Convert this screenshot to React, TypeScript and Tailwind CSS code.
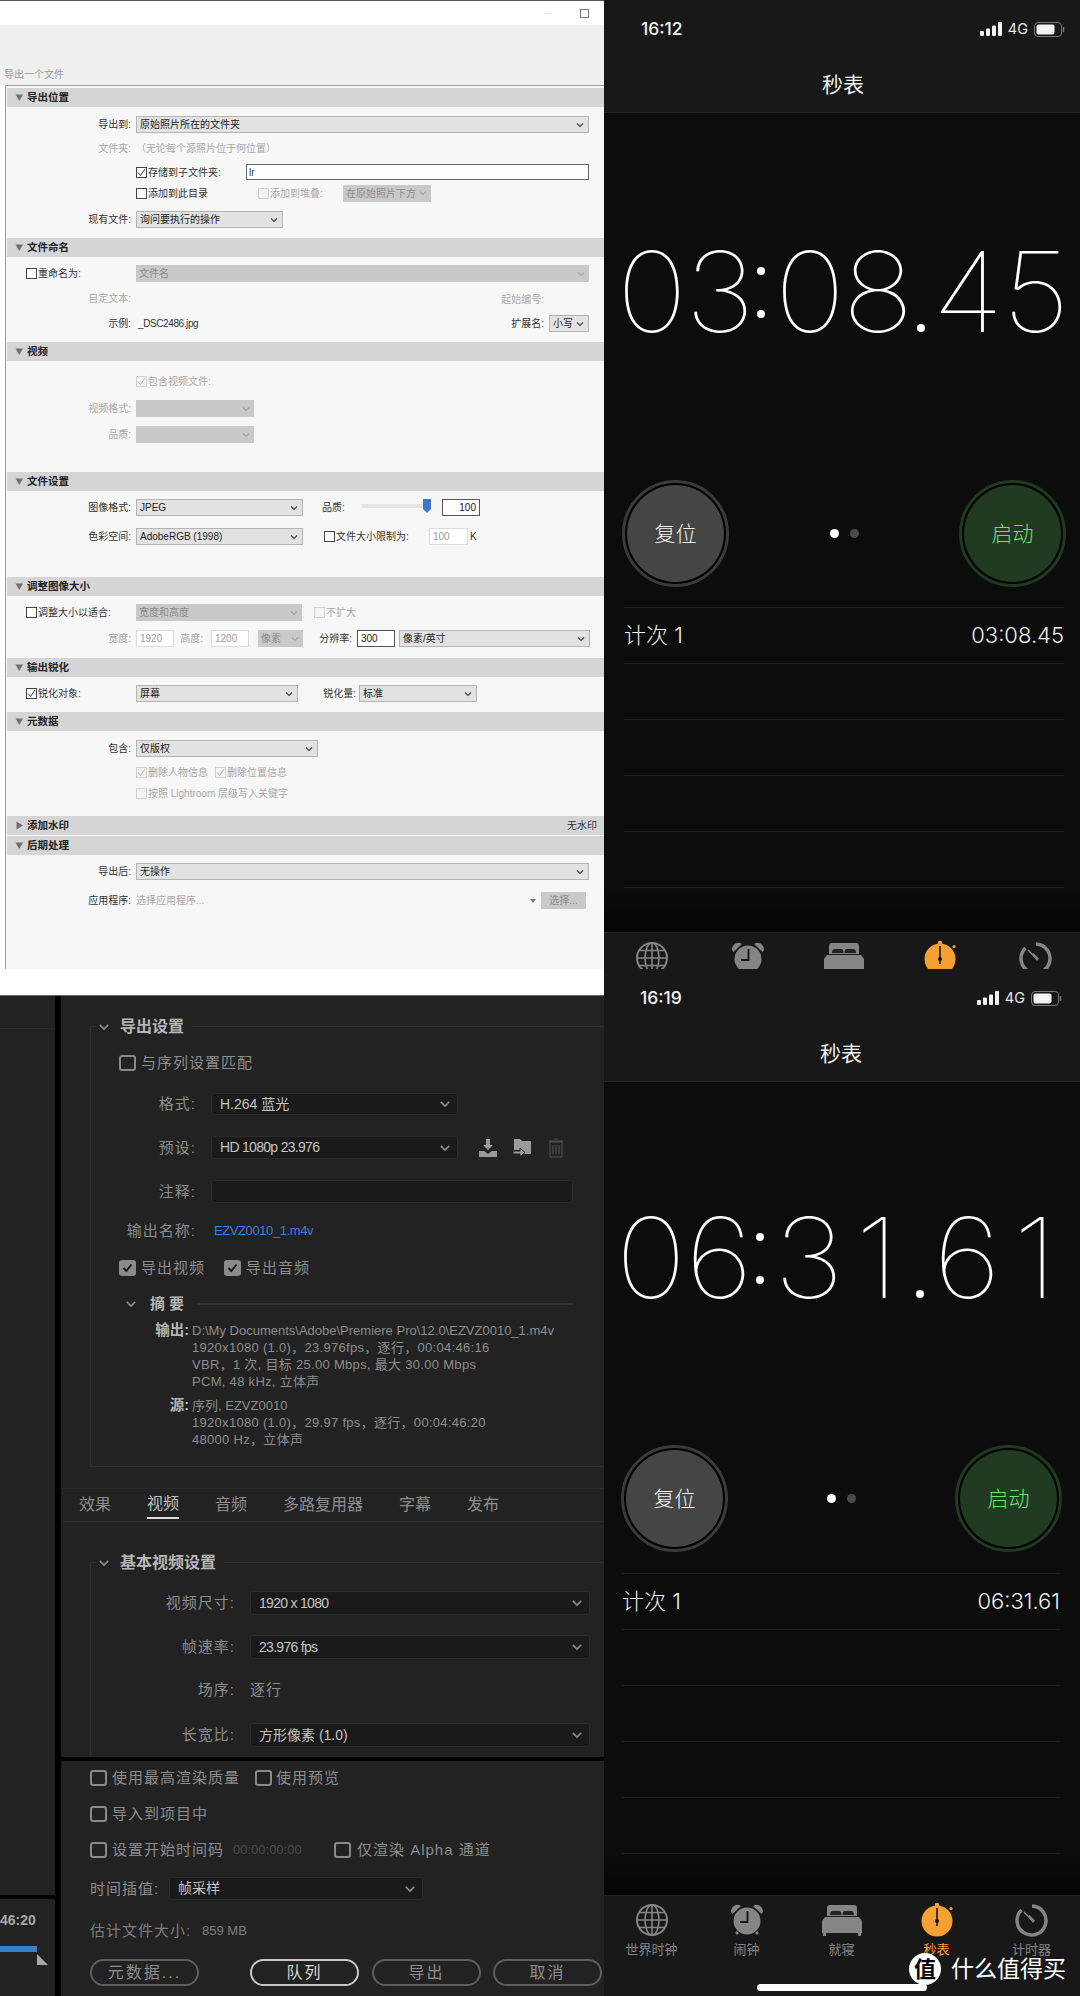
import React from "react";

const Chev = ({ c = "#555", s = 10 }: { c?: string; s?: number }) => (
  <svg width={s} height={s} viewBox="0 0 10 10" fill="none" className="shrink-0">
    <path d="M2 3.5 L5 6.5 L8 3.5" stroke={c} strokeWidth="1.2" />
  </svg>
);

const Tri = ({ open = true }: { open?: boolean }) => (
  <svg width="9" height="9" viewBox="0 0 9 9" className="shrink-0">
    {open ? <path d="M0.5 1.5 H8 L4.2 8 Z" fill="#6f6f6f" /> : <path d="M1.5 0.5 V8.5 L8 4.5 Z" fill="#6f6f6f" />}
  </svg>
);

const LHead = ({ t, open = true, right }: { t: string; open?: boolean; right?: string }) => (
  <div className="flex items-center justify-between h-[19px] ml-[1px] bg-[#d5d5d5] pl-[8px] pr-[7px] shrink-0">
    <div className="flex items-center gap-[3px]">
      <Tri open={open} />
      <span className="text-[10.5px] font-bold text-[#222]">{t}</span>
    </div>
    {right && <span className="text-[10px] text-[#333]">{right}</span>}
  </div>
);

const Lab = ({ t, dis, w = "w-[125px]" }: { t: string; dis?: boolean; w?: string }) => (
  <span className={`${w} shrink-0 text-right text-[10px] leading-none whitespace-nowrap ${dis ? "text-[#a8a8a8]" : "text-[#333]"}`}>{t}</span>
);

const Sel = ({ t, w, dis, ml = "ml-[5px]" }: { t?: string; w: string; dis?: boolean; ml?: string }) => (
  <div className={`${w} ${ml} h-[17px] flex items-center justify-between pl-[3px] pr-[3px] shrink-0 text-[10px] whitespace-nowrap ${dis ? "bg-[#c9c9c9] text-[#8b8b8b]" : "bg-[#e2e2e2] border border-[#b4b4b4] text-[#222]"}`}>
    <span>{t}</span>
    <Chev c={dis ? "#a5a5a5" : "#444"} />
  </div>
);

const Box = ({ on, dis }: { on?: boolean; dis?: boolean }) => (
  <span className={`w-[11px] h-[11px] shrink-0 border flex items-center justify-center ${dis ? "border-[#d0d0d0] bg-[#f4f4f4]" : "border-[#444] bg-white"}`}>
    {on && (
      <svg width="9" height="9" viewBox="0 0 9 9" fill="none">
        <path d="M1 4.5 L3.5 7.5 L8 1" stroke={dis ? "#b5b5b5" : "#333"} strokeWidth="1" />
      </svg>
    )}
  </span>
);

const LCheck = ({ t, on, dis, w }: { t: string; on?: boolean; dis?: boolean; w: string }) => (
  <div className={`${w} shrink-0 flex items-center gap-[1px] text-[10px] whitespace-nowrap ${dis ? "text-[#a8a8a8]" : "text-[#333]"}`}>
    <Box on={on} dis={dis} />
    <span>{t}</span>
  </div>
);

const LInput = ({ t, w, dis, right, ml = "" }: { t: string; w: string; dis?: boolean; right?: boolean; ml?: string }) => (
  <div className={`${w} ${ml} h-[17px] shrink-0 flex items-center px-[3px] text-[10px] border ${right ? "justify-end" : ""} ${dis ? "border-[#dcdcdc] bg-white text-[#999]" : "border-[#555] bg-white text-[#222]"}`}>{t}</div>
);

const LightPanel = () => (
  <div className="h-[995px] bg-white flex flex-col shrink-0 font-['Liberation_Sans','Noto_Sans_CJK_SC',sans-serif]">
    <div className="h-[1px] bg-[#555] shrink-0" />
    <div className="h-[24px] bg-white flex items-center justify-end pr-[15px] gap-[28px] shrink-0">
      <span className="w-[7px] h-[1px] bg-[#e5e5e5]" />
      <span className="w-[9px] h-[9px] border border-[#777]" />
    </div>
    <div className="h-[60px] bg-[#efefef] flex items-end pl-[4px] pb-[3px] shrink-0">
      <span className="text-[10px] leading-[14px] text-[#9a9a9a]">导出一个文件</span>
    </div>
    <div className="h-[884px] ml-[5px] bg-[#f7f7f7] border-l border-t border-[#9a9a9a] pt-[2px] flex flex-col shrink-0">
      <LHead t="导出位置" />
      <div className="h-[131px] flex flex-col shrink-0">
        <div className="flex items-center h-[17px] mt-[9px]"><Lab t="导出到:" /><Sel t="原始照片所在的文件夹" w="w-[453px]" /></div>
        <div className="flex items-center h-[17px] mt-[7px]"><Lab t="文件夹:" dis /><span className="ml-[5px] text-[10px] text-[#a8a8a8]">（无论每个源照片位于何位置）</span></div>
        <div className="flex items-center h-[16px] mt-[7px] pl-[130px]">
          <LCheck t="存储到子文件夹:" on w="w-[110px]" />
          <div className="w-[343px] h-[16px] border border-[#666] bg-white flex items-center px-[2px] text-[10px] text-[#335]">lr</div>
        </div>
        <div className="flex items-center h-[16px] mt-[5px] pl-[130px]">
          <LCheck t="添加到此目录" w="w-[122px]" />
          <LCheck t="添加到堆叠:" dis w="w-[85px]" />
          <Sel t="在原始照片下方" w="w-[88px]" dis ml="" />
        </div>
        <div className="flex items-center h-[17px] mt-[10px]"><Lab t="现有文件:" /><Sel t="询问要执行的操作" w="w-[147px]" /></div>
      </div>
      <LHead t="文件命名" />
      <div className="h-[85px] flex flex-col shrink-0">
        <div className="flex items-center h-[17px] mt-[8px] pl-[20px]"><LCheck t="重命名为:" w="w-[110px]" /><Sel t="文件名" w="w-[453px]" dis ml="" /></div>
        <div className="flex items-center h-[16px] mt-[9px]"><Lab t="自定文本:" dis /><span className="w-[413px] text-right text-[10px] text-[#a8a8a8]">起始编号:</span></div>
        <div className="flex items-center h-[17px] mt-[8px]">
          <Lab t="示例:" /><span className="ml-[7px] w-[406px] flex justify-between text-[10px] text-[#333]"><span className="tracking-[-0.4px]">_DSC2486.jpg</span><span>扩展名:</span></span>
          <Sel t="小写" w="w-[40px]" />
        </div>
      </div>
      <LHead t="视频" />
      <div className="h-[111px] flex flex-col shrink-0">
        <div className="flex items-center h-[16px] mt-[12px] pl-[130px]"><LCheck t="包含视频文件:" on dis w="w-[150px]" /></div>
        <div className="flex items-center h-[17px] mt-[11px]"><Lab t="视频格式:" dis /><Sel w="w-[118px]" dis /></div>
        <div className="flex items-center h-[17px] mt-[9px]"><Lab t="品质:" dis /><Sel w="w-[118px]" dis /></div>
      </div>
      <LHead t="文件设置" />
      <div className="h-[86px] flex flex-col shrink-0">
        <div className="flex items-center h-[17px] mt-[8px]">
          <Lab t="图像格式:" /><Sel t="JPEG" w="w-[167px]" />
          <span className="ml-[19px] w-[40px] text-[10px] text-[#333]">品质:</span>
          <div className="relative w-[69px] h-[17px] shrink-0">
            <div className="mt-[5px] h-[4px] bg-[#e4e4e4]" />
            <svg width="8" height="14" viewBox="0 0 8 14" className="absolute right-0 top-0"><path d="M0 0 H8 V10 L4 14 L0 10 Z" fill="#3d78cf" /></svg>
          </div>
          <LInput t="100" w="w-[38px]" right ml="ml-[11px]" />
        </div>
        <div className="flex items-center h-[17px] mt-[12px]">
          <Lab t="色彩空间:" /><Sel t="AdobeRGB (1998)" w="w-[167px]" />
          <span className="ml-[21px]" />
          <LCheck t="文件大小限制为:" w="w-[105px]" />
          <LInput t="100" w="w-[39px]" dis />
          <span className="ml-[2px] text-[10px] text-[#333]">K</span>
        </div>
      </div>
      <LHead t="调整图像大小" />
      <div className="h-[62px] flex flex-col shrink-0">
        <div className="flex items-center h-[17px] mt-[8px] pl-[20px]">
          <LCheck t="调整大小以适合:" w="w-[110px]" />
          <Sel t="宽度和高度" w="w-[166px]" dis ml="" />
          <span className="ml-[12px]" />
          <LCheck t="不扩大" dis w="w-[60px]" />
        </div>
        <div className="flex items-center h-[17px] mt-[9px]">
          <Lab t="宽度:" dis />
          <LInput t="1920" w="w-[38px]" dis ml="ml-[5px]" />
          <span className="w-[37px] text-right pr-[8px] text-[10px] text-[#a8a8a8] whitespace-nowrap">高度:</span>
          <LInput t="1200" w="w-[38px]" dis />
          <Sel t="像素" w="w-[45px]" dis ml="ml-[9px]" />
          <span className="w-[54px] text-right pr-[5px] text-[10px] text-[#333] whitespace-nowrap">分辨率:</span>
          <LInput t="300" w="w-[38px]" />
          <Sel t="像素/英寸" w="w-[191px]" ml="ml-[4px]" />
        </div>
      </div>
      <LHead t="输出锐化" />
      <div className="h-[35px] flex flex-col shrink-0">
        <div className="flex items-center h-[17px] mt-[8px] pl-[20px]">
          <LCheck t="锐化对象:" on w="w-[110px]" />
          <Sel t="屏幕" w="w-[162px]" ml="" />
          <span className="w-[61px] text-right pr-[3px] text-[10px] text-[#333] whitespace-nowrap">锐化量:</span>
          <Sel t="标准" w="w-[118px]" ml="" />
        </div>
      </div>
      <LHead t="元数据" />
      <div className="h-[85px] flex flex-col shrink-0">
        <div className="flex items-center h-[17px] mt-[9px]"><Lab t="包含:" /><Sel t="仅版权" w="w-[182px]" /></div>
        <div className="flex items-center h-[16px] mt-[7px] pl-[130px]">
          <LCheck t="删除人物信息" on dis w="w-[79px]" />
          <LCheck t="删除位置信息" on dis w="w-[90px]" />
        </div>
        <div className="flex items-center h-[16px] mt-[5px] pl-[130px]"><LCheck t="按照 Lightroom 层级写入关键字" dis w="w-[200px]" /></div>
      </div>
      <LHead t="添加水印" open={false} right="无水印" />
      <div className="h-[1px] shrink-0" />
      <LHead t="后期处理" />
      <div className="flex flex-col">
        <div className="flex items-center h-[17px] mt-[8px]"><Lab t="导出后:" /><Sel t="无操作" w="w-[453px]" /></div>
        <div className="flex items-center h-[17px] mt-[12px]">
          <Lab t="应用程序:" />
          <span className="ml-[5px] w-[393px] text-[10px] text-[#a8a8a8]">选择应用程序...</span>
          <svg width="8" height="8" viewBox="0 0 8 8"><path d="M1 2 H7 L4 6 Z" fill="#777" /></svg>
          <span className="ml-[4px] w-[45px] h-[17px] bg-[#c9c9c9] flex items-center justify-center text-[10px] text-[#8b8b8b]">选择...</span>
        </div>
      </div>
    </div>
    <div className="h-[25px] bg-white shrink-0" />
  </div>
);

const DChev = () => <Chev c="#8a8a8a" s={14} />;

const DBox = ({ on }: { on?: boolean }) => (
  <span className={`w-[17px] h-[16px] rounded-[3px] shrink-0 flex items-center justify-center border-2 border-[#8a8a8a] ${on ? "bg-[#8a8a8a]" : ""}`}>
    {on && (
      <svg width="11" height="10" viewBox="0 0 11 10" fill="none">
        <path d="M1.5 5 L4.3 8 L9.5 1.5" stroke="#1a1a1a" strokeWidth="2" />
      </svg>
    )}
  </span>
);

const DText = ({ t, c = "text-[#8d8d8d]" }: { t: string; c?: string }) => (
  <span className={`text-[15px] tracking-[1px] whitespace-nowrap ${c}`}>{t}</span>
);

const DSel = ({ t, w, h = "h-[23px]", ml = "ml-[15px]", tight }: { t: string; w: string; h?: string; ml?: string; tight?: boolean }) => (
  <div className={`${w} ${h} ${ml} shrink-0 rounded-[3px] bg-[#1a1a1a] border border-[#2b2b2b] flex items-center justify-between pl-[8px] pr-[5px] text-[14px] text-[#c4c4c4] whitespace-nowrap`}>
    <span className={tight ? "tracking-[-0.7px]" : ""}>{t}</span>
    <DChev />
  </div>
);

const DTitle = ({ t }: { t: string }) => (
  <div className="-mt-[11px] h-[22px] ml-[5px] w-fit flex items-center bg-[#222] pl-[1px] pr-[8px] gap-[9px] shrink-0">
    <DChev />
    <span className="text-[16px] font-bold text-[#b5b5b5] whitespace-nowrap">{t}</span>
  </div>
);

const DBtn = ({ t, w, hi, ml }: { t: string; w: string; hi?: boolean; ml: string }) => (
  <div className={`${w} ${ml} h-[27px] shrink-0 rounded-full border-2 flex items-center justify-center text-[16px] tracking-[2px] ${hi ? "border-[#c8c8c8] text-[#d8d8d8]" : "border-[#5e5e5e] text-[#8d8d8d]"}`}>{t}</div>
);

const SumLine = ({ t }: { t: string }) => <div className="h-[17px] leading-[17px] pl-[101px] tracking-[0.3px] whitespace-nowrap">{t}</div>;

const DarkPanel = () => (
  <div className="h-[1001px] flex bg-black border-t border-[#666] font-['Liberation_Sans','Noto_Sans_CJK_SC',sans-serif] shrink-0">
    <div className="w-[55px] shrink-0 bg-[#222] flex flex-col overflow-hidden">
      <div className="h-[33px] border-b border-[#2c2c2c] shrink-0" />
      <div className="h-[866px] shrink-0" />
      <div className="h-[4px] bg-black shrink-0" />
      <div className="mt-[11px] h-[20px] leading-[20px] text-[14px] font-bold text-[#a8a8a8] whitespace-nowrap">46:20</div>
      <div className="mt-[16px] h-[6px] w-[37px] bg-[#3d7fc0]" />
      <svg width="12" height="11" viewBox="0 0 12 11" className="ml-[37px] mt-[2px]"><path d="M0 0 L11 11 H0 Z" fill="#a8a8a8" /></svg>
    </div>
    <div className="w-[6px] shrink-0 bg-black" />
    <div className="w-[543px] shrink-0 bg-[#222] flex flex-col">
      <div className="mt-[30px] ml-[29px] h-[441px] border-l border-t border-b border-[#2e2e2e] flex flex-col shrink-0">
        <DTitle t="导出设置" />
        <div className="flex items-center h-[20px] mt-[15px] ml-[28px] gap-[5px]"><DBox /><DText t="与序列设置匹配" /></div>
        <div className="flex items-center h-[22px] mt-[20px]"><span className="w-[105px] text-right"><DText t="格式:" /></span><DSel t="H.264 蓝光" w="w-[247px]" h="h-[22px]" /></div>
        <div className="flex items-center h-[23px] mt-[21px]">
          <span className="w-[105px] text-right"><DText t="预设:" /></span>
          <DSel t="HD 1080p 23.976" w="w-[247px]" tight />
          <svg width="20" height="20" viewBox="0 0 20 20" className="ml-[20px] shrink-0"><path d="M8 1 H12 V7 H15 L10 12 L5 7 H8 Z M1 13 H6 L10 16 L14 13 H19 V19 H1 Z" fill="#9a9a9a" /></svg>
          <svg width="20" height="20" viewBox="0 0 20 20" className="ml-[14px] shrink-0"><path d="M2 1 H8 L10 3 H19 V16 H10 V12 H2 Z" fill="#9a9a9a" /><path d="M1 13 H8 V10 L13 14.5 L8 19 V16 H1 Z" fill="#9a9a9a" stroke="#222" strokeWidth="1" /></svg>
          <svg width="20" height="20" viewBox="0 0 20 20" fill="none" className="ml-[14px] shrink-0"><path d="M4 4 H16 V19 H4 Z M3 3 H17 M8 1 H12 M7 7 V16 M10 7 V16 M13 7 V16" stroke="#4e4e4e" strokeWidth="1.2" /></svg>
        </div>
        <div className="flex items-center h-[23px] mt-[21px]"><span className="w-[105px] text-right"><DText t="注释:" /></span><div className="ml-[15px] w-[362px] h-[23px] rounded-[3px] bg-[#1a1a1a] border border-[#2b2b2b]" /></div>
        <div className="flex items-center h-[20px] mt-[18px]"><span className="w-[105px] text-right"><DText t="输出名称:" /></span><span className="ml-[18px] text-[13px] tracking-[-0.4px] text-[#3f7fd6]">EZVZ0010_1.m4v</span></div>
        <div className="flex items-center h-[20px] mt-[17px] ml-[28px]">
          <div className="w-[105px] flex items-center gap-[5px]"><DBox on /><DText t="导出视频" /></div>
          <div className="flex items-center gap-[5px]"><DBox on /><DText t="导出音频" /></div>
        </div>
        <div className="flex items-center h-[20px] mt-[16px] ml-[33px]">
          <DChev />
          <span className="ml-[12px] text-[15px] tracking-[4px] font-bold text-[#b5b5b5] whitespace-nowrap">摘要</span>
          <div className="ml-[9px] w-[376px] h-[2px] bg-[#333]" />
        </div>
        <div className="mt-[8px] text-[13px] text-[#8d8d8d] flex flex-col">
          <div className="h-[17px] leading-[17px] flex whitespace-nowrap">
            <span className="w-[101px] text-right pr-[3px] font-bold text-[14.5px] text-[#b5b5b5]">输出:</span>
            <span>D:\My Documents\Adobe\Premiere Pro\12.0\EZVZ0010_1.m4v</span>
          </div>
          <SumLine t="1920x1080 (1.0)，23.976fps，逐行，00:04:46:16" />
          <SumLine t="VBR，1 次, 目标 25.00 Mbps, 最大 30.00 Mbps" />
          <SumLine t="PCM, 48 kHz, 立体声" />
          <div className="h-[17px] leading-[17px] mt-[7px] flex whitespace-nowrap">
            <span className="w-[101px] text-right pr-[3px] font-bold text-[14.5px] text-[#b5b5b5]">源:</span>
            <span>序列, EZVZ0010</span>
          </div>
          <SumLine t="1920x1080 (1.0)，29.97 fps，逐行，00:04:46:20" />
          <SumLine t="48000 Hz，立体声" />
        </div>
      </div>
      <div className="mt-[21px] border-t border-b border-[#2c2c2c] h-[34px] pl-[18px] flex gap-[36px] shrink-0">
        {["效果", "视频", "音频", "多路复用器", "字幕", "发布"].map((t, i) => (
          <div key={t} className={`h-[30px] pt-[2px] flex items-center text-[16px] whitespace-nowrap ${i === 1 ? "border-b-2 border-[#ddd] text-[#bdbdbd]" : "text-[#8d8d8d]"}`}>{t}</div>
        ))}
      </div>
      <div className="mt-[40px] ml-[29px] h-[195px] border-l border-t border-[#2e2e2e] flex flex-col shrink-0">
        <DTitle t="基本视频设置" />
        <div className="flex items-center h-[24px] mt-[17px]"><span className="w-[144px] text-right"><DText t="视频尺寸:" /></span><DSel t="1920 x 1080" w="w-[340px]" h="h-[24px]" tight /></div>
        <div className="flex items-center h-[24px] mt-[20px]"><span className="w-[144px] text-right"><DText t="帧速率:" /></span><DSel t="23.976 fps" w="w-[340px]" h="h-[24px]" tight /></div>
        <div className="flex items-center h-[20px] mt-[21px]"><span className="w-[144px] text-right"><DText t="场序:" /></span><span className="ml-[15px]"><DText t="逐行" /></span></div>
        <div className="flex items-center h-[24px] mt-[23px]"><span className="w-[144px] text-right"><DText t="长宽比:" /></span><DSel t="方形像素 (1.0)" w="w-[340px]" h="h-[24px]" /></div>
      </div>
      <div className="h-[4px] bg-black shrink-0" />
      <div className="flex flex-col pl-[29px]">
        <div className="flex items-center h-[20px] mt-[7px]">
          <div className="w-[165px] flex items-center gap-[5px]"><DBox /><DText t="使用最高渲染质量" /></div>
          <div className="flex items-center gap-[4px]"><DBox /><DText t="使用预览" /></div>
        </div>
        <div className="flex items-center h-[20px] mt-[16px] gap-[5px]"><DBox /><DText t="导入到项目中" /></div>
        <div className="flex items-center h-[20px] mt-[16px]">
          <div className="w-[143px] flex items-center gap-[5px]"><DBox /><DText t="设置开始时间码" /></div>
          <span className="w-[101px] text-[13px] text-[#4b4b4b]">00:00:00:00</span>
          <div className="flex items-center gap-[6px]"><DBox /><DText t="仅渲染 Alpha 通道" /></div>
        </div>
        <div className="flex items-center h-[23px] mt-[17px]">
          <span className="w-[79px]"><DText t="时间插值:" /></span>
          <DSel t="帧采样" w="w-[254px]" ml="" />
        </div>
        <div className="flex items-center h-[20px] mt-[21px] text-[13px] text-[#7d7d7d] whitespace-nowrap">
          <span className="w-[112px]"><DText t="估计文件大小:" c="text-[#7d7d7d]" /></span><span>859 MB</span>
        </div>
        <div className="flex items-center h-[27px] mt-[18px]">
          <DBtn t="元数据..." w="w-[109px]" ml="" />
          <DBtn t="队列" w="w-[109px]" hi ml="ml-[51px]" />
          <DBtn t="导出" w="w-[109px]" ml="ml-[13px]" />
          <DBtn t="取消" w="w-[109px]" ml="ml-[12px]" />
        </div>
      </div>
    </div>
  </div>
);

const G = "#858585";

const Globe = () => (
  <svg width="34" height="34" viewBox="0 0 34 34" fill="none" stroke={G} strokeWidth="1.6">
    <circle cx="17" cy="17" r="15" strokeWidth="2" />
    <ellipse cx="17" cy="17" rx="7" ry="15" />
    <path d="M17 2 V32 M2 17 H32 M4.5 9.5 H29.5 M4.5 24.5 H29.5" />
  </svg>
);

const Alarm = () => (
  <svg width="34" height="34" viewBox="0 0 34 34">
    <path d="M1 9 C1 3 7 0 11 3 L2.5 11 Z M33 9 C33 3 27 0 23 3 L31.5 11 Z" fill={G} />
    <circle cx="17" cy="18" r="13.5" fill={G} />
    <path d="M6 29 L8 31 M28 29 L26 31" stroke={G} strokeWidth="2.5" />
    <path d="M17.5 8 V19 H10" fill="none" stroke="#111" strokeWidth="1.8" />
  </svg>
);

const Bed = () => (
  <svg width="40" height="34" viewBox="0 0 40 34">
    <path d="M5 5 Q5 2 8 2 H32 Q35 2 35 5 V13 H5 Z" fill={G} />
    <path d="M8 12 Q8 8 11 8 H17 Q19.500 8 19.500 12 Z M20.500 12 Q20.500 8 23 8 H29 Q32 8 32 12 Z" fill="#222" />
    <path d="M3 14 H37 L40 18 V30 H0 V18 Z" fill={G} />
    <path d="M1 30 H4 V33 H1 Z M36 30 H39 V33 H36 Z" fill={G} />
  </svg>
);

const Watch = () => (
  <svg width="34" height="34" viewBox="0 0 34 34">
    <rect x="15" y="0" width="4" height="4" rx="1" fill="#f5a033" />
    <circle cx="31" cy="5.500" r="1.600" fill="#f5a033" />
    <circle cx="17" cy="18" r="15.500" fill="#f5a033" />
    <path d="M17 5 V23" stroke="#111" strokeWidth="1.500" />
    <circle cx="17" cy="18" r="2" fill="#111" />
  </svg>
);

const Timer = () => (
  <svg width="34" height="34" viewBox="0 0 34 34" fill="none">
    <path d="M17 3 A14.500 14.500 0 1 1 6.500 7" stroke={G} strokeWidth="3.500" />
    <path d="M9 9 L18 18" stroke={G} strokeWidth="1.500" />
    <path d="M13 13.500 L14.500 12 L20 17.500 L18 20 Z" fill={G} />
  </svg>
);

const Status = ({ t, cls }: { t: string; cls: string }) => (
  <div className={`flex items-center justify-between h-[58px] ${cls}`}>
    <span className="text-[17.5px] font-medium text-[#f2f2f2]">{t}</span>
    <div className="flex items-center gap-[6px]">
      <svg width="22" height="14" viewBox="0 0 22 14" fill="#f2f2f2">
        <rect x="0" y="9" width="4" height="5" rx="1" />
        <rect x="6" y="6.500" width="4" height="7.500" rx="1" />
        <rect x="12" y="3.500" width="4" height="10.500" rx="1" />
        <rect x="18" y="0" width="4" height="14" rx="1" />
      </svg>
      <span className="text-[14.5px] leading-none text-[#e8e8e8]">4G</span>
      <svg width="31" height="15" viewBox="0 0 31 15" fill="none">
        <rect x="0.500" y="0.500" width="27" height="14" rx="3.500" stroke="#777" />
        <rect x="2.500" y="2.500" width="18" height="10" rx="2" fill="#f4f4f4" />
        <path d="M29.500 5 V10" stroke="#777" strokeWidth="1.500" />
      </svg>
    </div>
  </div>
);

const Big = ({ s, cls }: { s: string; cls: string }) => (
  <div className={`flex h-[120px] shrink-0 items-center text-[111px] font-[140] leading-[120px] text-white ${cls}`}>
    {s.split("").map((c, i) =>
      c === ":" ? (
        <span key={i} className="w-[22px] h-[81px] shrink-0 flex flex-col pl-[3px] pt-[15px] gap-[35px]">
          <span className="w-[8px] h-[8px] rounded-full bg-white" />
          <span className="w-[8px] h-[8px] rounded-full bg-white" />
        </span>
      ) : c === "." ? (
        <span key={i} className="w-[22px] h-[81px] shrink-0 flex flex-col pl-[5px] pt-[72px]">
          <span className="w-[8px] h-[8px] rounded-full bg-white" />
        </span>
      ) : (
        <span key={i} className="w-[68px] shrink-0 text-center scale-x-[1.08]">{c}</span>
      )
    )}
  </div>
);

const Round = ({ t, green }: { t: string; green?: boolean }) => (
  <div className={`w-[107px] h-[107px] rounded-full border-[3px] p-[2px] bg-black flex ${green ? "border-[#1f3a22]" : "border-[#3b3b3b]"}`}>
    <div className={`flex-1 rounded-full flex items-center justify-center text-[21px] font-light ${green ? "bg-[#213a22] text-[#6fe077]" : "bg-[#454545] text-[#f5f5f5]"}`}>{t}</div>
  </div>
);

const Phone = ({ two }: { two?: boolean }) => (
  <div className={`flex flex-col overflow-hidden bg-[#0c0c0c] shrink-0 font-['Inter','Noto_Sans_CJK_SC',sans-serif] ${two ? "h-[1027px]" : "h-[969px]"}`}>
    <div className="h-[113px] bg-[#181818] border-b border-[#222] shrink-0">
      <Status t={two ? "16:19" : "16:12"} cls={two ? "pl-[36px] pr-[18px]" : "pl-[37px] pr-[15px]"} />
      <div className={`h-[54px] flex items-center justify-center text-[21px] text-[#f0f0f0] ${two ? "pr-[2px]" : "pl-[2px]"}`}>秒表</div>
    </div>
    <Big s={two ? "06:31.61" : "03:08.45"} cls={two ? "mt-[116px] pl-[13px]" : "mt-[119px] pl-[14px]"} />
    <div className={`flex items-center justify-between shrink-0 ${two ? "mt-[127px] pl-[17px] pr-[18px]" : "mt-[128px] pl-[18px] pr-[14px]"}`}>
      <Round t="复位" />
      <div className="flex gap-[11px]">
        <span className="w-[9px] h-[9px] rounded-full bg-white" />
        <span className="w-[9px] h-[9px] rounded-full bg-[#4a4a4a]" />
      </div>
      <Round t="启动" green />
    </div>
    <div className={`flex-1 flex flex-col min-h-0 ${two ? "mt-[21px]" : "mt-[20px]"}`}>
      <div className={`h-[56px] border-t border-[#1f1f1f] flex items-center justify-between text-[22px] font-light text-[#f0f0f0] shrink-0 ${two ? "ml-[18px] mr-[20px]" : "ml-[20px] mr-[16px]"}`}>
        <span>计次 1</span>
        <span>{two ? "06:31.61" : "03:08.45"}</span>
      </div>
      {[0, 1, 2, 3].map((i) => (
        <div key={i} className={`h-[56px] border-t border-[#1f1f1f] shrink-0 ${two ? "ml-[18px] mr-[20px]" : "ml-[20px] mr-[16px]"}`} />
      ))}
      <div className="flex-1 bg-gradient-to-b from-[#0c0c0c] to-[#050505]">
        <div className={`border-t border-[#1f1f1f] ${two ? "ml-[18px] mr-[20px]" : "ml-[20px] mr-[16px]"}`} />
      </div>
    </div>
    <div className={`bg-[#181818] border-t border-[#222] shrink-0 relative ${two ? "h-[101px] pt-[7px]" : "h-[37px] pt-[8px]"}`}>
      <div className={`grid grid-cols-5 ${two ? "w-[475px]" : "w-[480px]"}`}>
        {[
          { i: <Globe />, t: "世界时钟" },
          { i: <Alarm />, t: "闹钟" },
          { i: <Bed />, t: "就寝" },
          { i: <Watch />, t: "秒表", on: true },
          { i: <Timer />, t: "计时器" },
        ].map((x) => (
          <div key={x.t} className="flex flex-col items-center">
            {x.i}
            {two && <span className={`mt-[3px] text-[13px] leading-[18px] ${x.on ? "text-[#f5a033]" : "text-[#858585]"}`}>{x.t}</span>}
          </div>
        ))}
      </div>
      {two && (
        <>
          <div className="absolute left-[153px] top-[88px] w-[170px] h-[7px] rounded-full bg-white" />
          <div className="absolute left-[305px] top-[57px] flex items-center">
            <span className="w-[32px] h-[32px] rounded-full bg-white flex items-center justify-center text-[22px] font-bold text-black leading-none">值</span>
            <span className="ml-[10px] text-[23px] leading-none text-white whitespace-nowrap">什么值得买</span>
          </div>
        </>
      )}
    </div>
  </div>
);

export default function App() {
  return (
    <div className="w-[1080px] h-[1996px] flex overflow-hidden bg-black">
      <div className="w-[604px] shrink-0 flex flex-col">
        <LightPanel />
        <DarkPanel />
      </div>
      <div className="w-[476px] shrink-0 flex flex-col">
        <Phone />
        <Phone two />
      </div>
    </div>
  );
}
